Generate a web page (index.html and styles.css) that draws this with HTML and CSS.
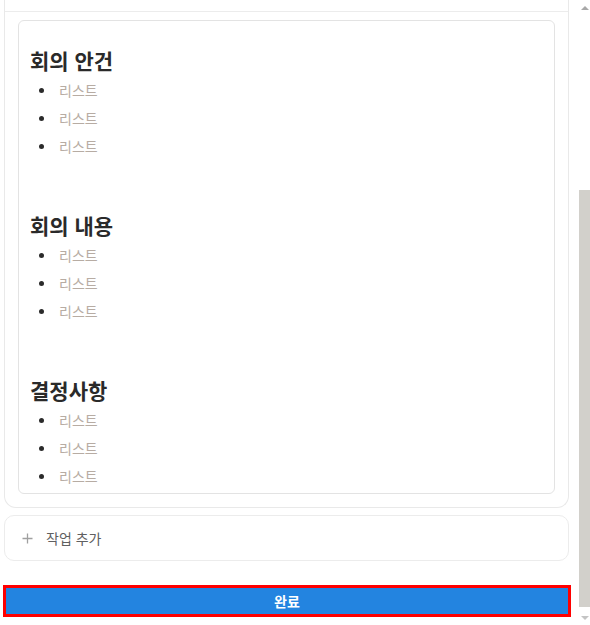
FILE: index.html
```html
<!DOCTYPE html>
<html lang="ko">
<head>
<meta charset="utf-8">
<title>회의록</title>
<link rel="stylesheet" href="styles.css">
</head>
<body>
<div class="screen">
  <div class="page">
    <section class="card">
      <div class="card-head"></div>
      <div class="card-body">
        <div class="editor">
          <h2 class="sec-title">회의 안건</h2>
          <ul class="items">
            <li>리스트</li>
            <li>리스트</li>
            <li>리스트</li>
          </ul>
          <h2 class="sec-title">회의 내용</h2>
          <ul class="items">
            <li>리스트</li>
            <li>리스트</li>
            <li>리스트</li>
          </ul>
          <h2 class="sec-title">결정사항</h2>
          <ul class="items">
            <li>리스트</li>
            <li>리스트</li>
            <li>리스트</li>
          </ul>
        </div>
      </div>
    </section>
    <div class="add-task">
      <svg class="plus" width="11" height="11" viewBox="0 0 11 11" aria-hidden="true">
        <path d="M5.5 0.5V10.5M0.5 5.5H10.5" stroke="#a0a0a0" stroke-width="1.3" fill="none"/>
      </svg>
      <span class="add-label">작업 추가</span>
    </div>
    <button class="done" type="button">완료</button>
  </div>
  <div class="scrollbar" aria-hidden="true">
    <div class="arrow arrow-up"></div>
    <div class="track"><div class="thumb"></div></div>
    <div class="arrow arrow-down"></div>
  </div>
</div>
</body>
</html>
```
FILE: styles.css
```css
html, body {
  margin: 0;
  padding: 0;
  background: #ffffff;
  overflow: hidden;
}
body {
  font-family: "Noto Sans CJK KR", "Noto Sans", sans-serif;
  color: #2b2b2b;
}
.screen {
  display: flex;
  height: 625px;
}
.page {
  flex: 1;
  padding: 0 6px 0 4px;
  display: flex;
  flex-direction: column;
}
.card {
  border: 1px solid #e9e9e9;
  border-top: none;
  border-radius: 0 0 12px 12px;
}
.card-head {
  height: 11px;
  border-bottom: 1px solid #ececec;
}
.card-body {
  padding: 8px 13px 13px 13px;
}
.editor {
  border: 1px solid #e3e3e3;
  border-radius: 6px;
  padding: 23px 11px 3px 11px;
}
.sec-title {
  margin: 49px 0 0 0;
  font-size: 21px;
  line-height: 32px;
  font-weight: 700;
  color: #2a2a2a;
}
.sec-title:first-child {
  margin-top: 0;
}
.items {
  margin: 0;
  padding: 0;
  list-style: none;
}
.items li {
  display: flex;
  align-items: center;
  gap: 15px;
  padding-left: 9px;
  font-size: 14px;
  line-height: 28px;
  color: #b7aca3;
}
.items li::before {
  content: "";
  width: 5px;
  height: 5px;
  border-radius: 50%;
  background: #2b2b2b;
  flex: none;
}
.add-task {
  margin-top: 7px;
  height: 44px;
  border: 1px solid #ececec;
  border-radius: 10px;
  display: flex;
  align-items: center;
  padding-left: 17px;
  gap: 13px;
}
.plus {
  flex: none;
}
.add-label {
  font-size: 14px;
  color: #606060;
}
.done {
  margin: 27px 1px 0 2px;
  height: 26px;
  border: none;
  outline: 3px solid #ff0000;
  background: #2384e0;
  color: #ffffff;
  font-family: "Noto Sans CJK KR", "Noto Sans", sans-serif;
  font-size: 14px;
  font-weight: 700;
  padding: 0;
}
.scrollbar {
  width: 15px;
  flex: none;
  display: flex;
  flex-direction: column;
  background: #ffffff;
}
.arrow {
  height: 15px;
  display: flex;
  align-items: center;
  justify-content: center;
  padding-left: 4px;
  box-sizing: border-box;
}
.arrow::before {
  content: "";
  width: 0;
  height: 0;
  border-left: 4px solid transparent;
  border-right: 4px solid transparent;
}
.arrow-up::before {
  border-bottom: 4px solid #a8a8a8;
}
.arrow-down::before {
  border-top: 4px solid #c4c4c4;
}
.track {
  flex: 1;
  display: flex;
  flex-direction: column;
  justify-content: flex-end;
  padding-bottom: 3px;
}
.thumb {
  height: 417px;
  margin-left: 4px;
  background: #d2d0cb;
}
```
